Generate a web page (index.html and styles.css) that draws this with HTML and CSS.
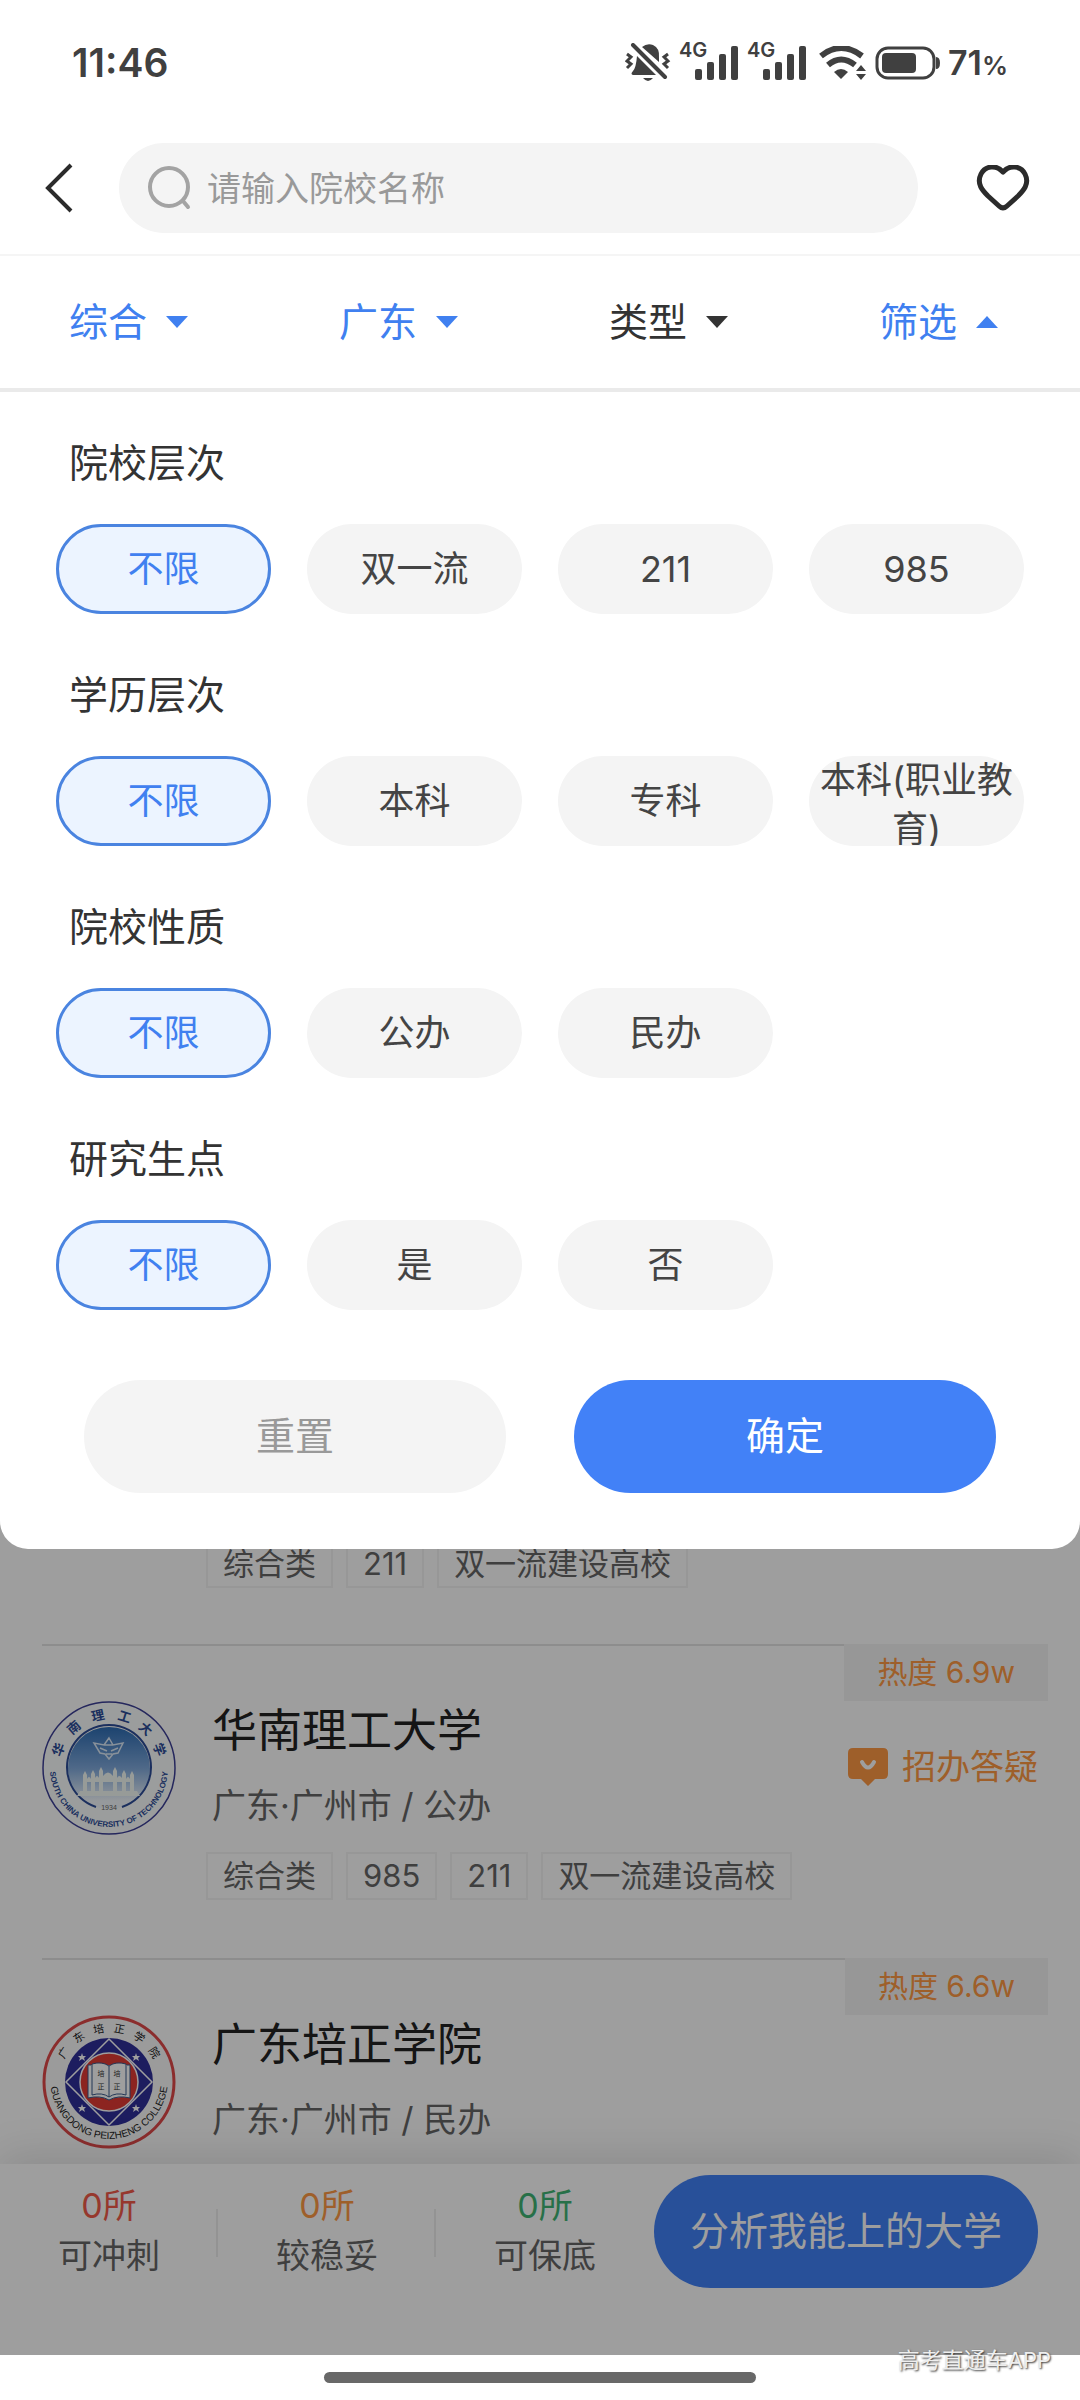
FILE: index.html
```html
<!DOCTYPE html>
<html lang="zh-CN">

<head>
    <meta charset="utf-8">
    <meta name="viewport" content="width=device-width, initial-scale=1">
    <title>院校筛选</title>
    <link rel="stylesheet" href="styles.css">
</head>

<body>
    <div class="app">
        <div class="statusbar">
            <span class="time">11:46</span>
            <div class="status-icons">
                <svg class="bell" width="46" height="40" viewBox="0 0 46 40">
                    <path d="M17 4 Q22 0 28 2 Q35 5 34 15 L34 19 Z" fill="#404040"/>
                    <path d="M12 13 L31 32 H8 Q5 31 8 28 Q11 25 12 13 Z" fill="#404040"/>
                    <path d="M18 35 H28 Q23 41 18 35 Z" fill="#404040"/>
                    <path d="M8 2 L40 34" stroke="#404040" stroke-width="4" stroke-linecap="round"/>
                    <path d="M2 11 L6 14 L2 18 L6 21 L2 25 M43 11 L39 14 L43 18 L39 21 L43 25" fill="none" stroke="#404040" stroke-width="3"/>
                </svg>
                <div class="signal">
                    <span>4G</span>
                    <svg width="44" height="34" viewBox="0 0 44 34" fill="#404040">
                        <rect x="0" y="23" width="7" height="11" rx="2"/><rect x="12" y="16" width="7" height="18" rx="2"/>
                        <rect x="24" y="8" width="7" height="26" rx="2"/><rect x="36" y="0" width="7" height="34" rx="2"/>
                    </svg>
                </div>
                <div class="signal">
                    <span>4G</span>
                    <svg width="44" height="34" viewBox="0 0 44 34" fill="#404040">
                        <rect x="0" y="23" width="7" height="11" rx="2"/><rect x="12" y="16" width="7" height="18" rx="2"/>
                        <rect x="24" y="8" width="7" height="26" rx="2"/><rect x="36" y="0" width="7" height="34" rx="2"/>
                    </svg>
                </div>
                <svg class="wifi" width="48" height="34" viewBox="0 0 48 34">
                    <path d="M2 10 Q22 -6 43 10" fill="none" stroke="#404040" stroke-width="6"/>
                    <path d="M9 19 Q22 8 36 19" fill="none" stroke="#404040" stroke-width="6"/>
                    <path d="M15 26 Q22 20 29 26 L22 33 Z" fill="#404040"/>
                    <path d="M42 19 L47 25 H37 Z M42 34 L47 28 H37 Z" fill="#404040"/>
                </svg>
                <svg class="battery" width="65" height="34" viewBox="0 0 65 34">
                    <rect x="2" y="2" width="57" height="30" rx="11" fill="none" stroke="#404040" stroke-width="3"/>
                    <rect x="7" y="7" width="34" height="20" rx="4" fill="#404040"/>
                    <path d="M61 11 Q65 11 65 17 Q65 23 61 23 Z" fill="#404040"/>
                </svg>
                <span class="percent">71<small>%</small></span>
            </div>
        </div>

        <header class="header">
            <button class="icon-btn" aria-label="返回">
                <svg width="30" height="52" viewBox="0 0 30 52"><path d="M27 3 L4 26 L27 49" fill="none" stroke="#2b2b2b" stroke-width="4"/></svg>
            </button>
            <label class="search">
                <svg width="44" height="44" viewBox="0 0 44 44" fill="none" stroke="#a3a3a3" stroke-width="4" stroke-linecap="round">
                    <circle cx="22" cy="21" r="19"/><path d="M36 35 L41 41"/>
                </svg>
                <input type="text" placeholder="请输入院校名称" aria-label="请输入院校名称">
            </label>
            <button class="icon-btn" aria-label="收藏">
                <svg width="54" height="46" viewBox="0 0 54 46"><path d="M27 7 C20 -1 9 1 5 9 C0 19 7 26 12 31 L23 41 Q27 45 31 41 L42 31 C47 26 54 19 49 9 C45 1 34 -1 27 7 Z" fill="none" stroke="#2b2b2b" stroke-width="5" stroke-linejoin="round"/></svg>
            </button>
        </header>

        <nav class="tabs">
            <button class="tab active">综合<i class="caret"></i></button>
            <button class="tab active">广东<i class="caret"></i></button>
            <button class="tab">类型<i class="caret"></i></button>
            <button class="tab active">筛选<i class="caret up"></i></button>
        </nav>

        <section class="panel">
            <h2>院校层次</h2>
            <div class="chips">
                <button class="chip selected">不限</button>
                <button class="chip">双一流</button>
                <button class="chip">211</button>
                <button class="chip">985</button>
            </div>
            <h2>学历层次</h2>
            <div class="chips">
                <button class="chip selected">不限</button>
                <button class="chip">本科</button>
                <button class="chip">专科</button>
                <button class="chip">本科(职业教育)</button>
            </div>
            <h2>院校性质</h2>
            <div class="chips">
                <button class="chip selected">不限</button>
                <button class="chip">公办</button>
                <button class="chip">民办</button>
            </div>
            <h2>研究生点</h2>
            <div class="chips">
                <button class="chip selected">不限</button>
                <button class="chip">是</button>
                <button class="chip">否</button>
            </div>
            <div class="actions">
                <button class="reset">重置</button>
                <button class="confirm">确定</button>
            </div>
        </section>

        <main class="page">
            <div class="results">
                <article class="school scrolled">
                    <div class="tags"><span>综合类</span><span>211</span><span>双一流建设高校</span></div>
                </article>

                <article class="school">
                    <svg class="logo" width="134" height="134" viewBox="0 0 134 134">
                        <defs>
                            <linearGradient id="sky" x1="0" y1="0" x2="0" y2="1">
                                <stop offset="0" stop-color="#2e6db4"/><stop offset="0.5" stop-color="#7fa9dc"/><stop offset="0.9" stop-color="#f2f7fc"/>
                            </linearGradient>
                            <path id="arc1" d="M8 67 A59 59 0 0 0 126 67"/>
                        </defs>
                        <circle cx="67" cy="67" r="66" fill="#fbfdfd" stroke="#3c3f96" stroke-width="1.5"/>
                        <circle cx="67" cy="67" r="41" fill="url(#sky)"/>
                        <path d="M54 106 A42 42 0 1 1 80 106" fill="none" stroke="#2d4d98" stroke-width="2"/>
                        <path d="M67 37 L71 44 L81 42 L76 52 L71 53 L67 58 L63 53 L58 52 L52 42 L62 44 Z M58 47 L65 50 M76 47 L69 50 M62 44 L71 44 M64 53 H70" fill="none" stroke="#dceaf8" stroke-width="1.5"/>
                        <g fill="#f4faf6">
                            <path d="M41 74 L43 70 L45 74 V91 H41 Z M49 73 L51 69 L53 73 V91 H49 Z M57 70 L59 66 L61 70 V91 H57 Z M71 70 L73 66 L75 70 V91 H71 Z M80 73 L82 69 L84 73 V91 H80 Z M88 74 L90 70 L92 74 V91 H88 Z"/>
                            <path d="M45 78 Q47 74 49 78 L53 77 Q55 73 57 77 L61 75 Q66 68 71 75 L75 77 Q77 73 80 77 L84 78 Q86 74 88 78 V81 H45 Z M38 90 H95 L98 95 H35 Z"/>
                        </g>
                        <text class="year" x="67" y="109">1934</text>
                        <g class="seal-cn blue">
                            <text x="67" y="18" transform="rotate(-70 67 67)">华</text>
                            <text x="67" y="18" transform="rotate(-41 67 67)">南</text>
                            <text x="67" y="18" transform="rotate(-12 67 67)">理</text>
                            <text x="67" y="18" transform="rotate(17 67 67)">工</text>
                            <text x="67" y="18" transform="rotate(43 67 67)">大</text>
                            <text x="67" y="18" transform="rotate(70 67 67)">学</text>
                        </g>
                        <text class="seal-en narrow"><textPath href="#arc1" startOffset="50%">SOUTH CHINA UNIVERSITY OF TECHNOLOGY</textPath></text>
                    </svg>
                    <div class="info">
                        <h3>华南理工大学</h3>
                        <p>广东·广州市 / 公办</p>
                        <div class="tags"><span>综合类</span><span>985</span><span>211</span><span>双一流建设高校</span></div>
                    </div>
                    <div class="side">
                        <span class="heat">热度 6.9w</span>
                        <a class="ask" href="#">
                            <svg width="40" height="38" viewBox="0 0 40 38"><path d="M5 0 H35 Q40 0 40 5 V26 Q40 31 35 31 H27 L20 38 L13 31 H5 Q0 31 0 26 V5 Q0 0 5 0 Z" fill="#ff9a45"/><path d="M14 14 Q20 25 26 14" fill="none" stroke="#fff" stroke-width="4" stroke-linecap="round"/></svg>
                            招办答疑
                        </a>
                    </div>
                </article>

                <article class="school">
                    <svg class="logo" width="134" height="134" viewBox="0 0 134 134">
                        <defs>
                            <path id="arc2" d="M8 64 A59 60 0 0 0 126 64"/>
                            <path id="star" d="M0 -4 L1 -1 L4 -1 L2 1 L3 4 L0 2 L-3 4 L-2 1 L-4 -1 L-1 -1 Z" fill="#fff"/>
                        </defs>
                        <circle cx="67" cy="67" r="65" fill="#fbfbfb" stroke="#e04a4a" stroke-width="3"/>
                        <circle cx="67" cy="67" r="44" fill="#2f2f9a"/>
                        <path d="M67 24 L110 67 L67 110 L24 67 Z" fill="none" stroke="#fff" stroke-width="1.5"/>
                        <circle cx="67" cy="67" r="29" fill="#e23a35" stroke="#fff" stroke-width="1.5"/>
                        <use href="#star" x="40" y="42"/><use href="#star" x="94" y="42"/>
                        <use href="#star" x="40" y="93"/><use href="#star" x="94" y="93"/>
                        <path d="M49 50 H46 V83 Q58 80 67 85 Q76 80 88 83 V50 H85" fill="#fff" stroke="#3a5a8c"/>
                        <path d="M67 51 Q60 46 50 49 V80 Q60 77 67 82 Q74 77 84 80 V49 Q74 46 67 51 Z M67 51 V82" fill="#fff" stroke="#3a5a8c"/>
                        <g class="book">
                            <text x="59" y="61">培</text><text x="75" y="61">培</text>
                            <text x="59" y="74">正</text><text x="75" y="74">正</text>
                        </g>
                        <g class="seal-cn">
                            <text x="67" y="17" transform="rotate(-57 67 67)">广</text>
                            <text x="67" y="17" transform="rotate(-34 67 67)">东</text>
                            <text x="67" y="17" transform="rotate(-11 67 67)">培</text>
                            <text x="67" y="17" transform="rotate(11 67 67)">正</text>
                            <text x="67" y="17" transform="rotate(34 67 67)">学</text>
                            <text x="67" y="17" transform="rotate(57 67 67)">院</text>
                        </g>
                        <text class="seal-en"><textPath href="#arc2" startOffset="50%">GUANGDONG PEIZHENG COLLEGE</textPath></text>
                    </svg>
                    <div class="info">
                        <h3>广东培正学院</h3>
                        <p>广东·广州市 / 民办</p>
                    </div>
                    <div class="side">
                        <span class="heat">热度 6.6w</span>
                    </div>
                </article>
            </div>

            <footer class="bottombar">
                <div class="stat"><b class="red">0所</b><span>可冲刺</span></div>
                <div class="stat"><b class="orange">0所</b><span>较稳妥</span></div>
                <div class="stat"><b class="green">0所</b><span>可保底</span></div>
                <button class="analyse">分析我能上的大学</button>
            </footer>
            <div class="mask"></div>
        </main>

        <div class="homebar">
            <i class="home-pill"></i>
            <span class="watermark">高考直通车APP</span>
        </div>
    </div>
</body>

</html>
```
FILE: styles.css
```css
* {
    box-sizing: border-box;
}

body {
    margin: 0;
    background: #fff;
    color: #333;
    font-family: Inter, "Noto Sans CJK SC", sans-serif;
    line-height: 1.25;
}

button,
input {
    margin: 0;
    padding: 0;
    border: 0;
    background: none;
    color: inherit;
    font-family: inherit;
    line-height: inherit;
}

svg {
    display: block;
    flex: none;
}

h2, h3, p {
    margin: 0;
    font-weight: 400;
}

.app {
    display: flex;
    flex-direction: column;
    height: 100vh;
    overflow: hidden;
}

/* status bar */
.statusbar {
    display: flex;
    flex: none;
    align-items: center;
    justify-content: space-between;
    height: 126px;
    padding: 0 72px;
    color: #404040;
    font-weight: 600;
}

.time {
    font-size: 39px;
}

.status-icons {
    display: flex;
    align-items: center;
    gap: 8px;
}

.signal {
    display: flex;
    align-items: flex-end;
}

.signal span {
    align-self: flex-start;
    width: 16px;
    font-size: 20px;
    line-height: 16px;
    margin-top: -4px;
}

.wifi {
    margin-left: 4px;
}

.percent {
    font-size: 34px;
}

.percent small {
    font-size: 26px;
}

/* search row */
.header {
    display: flex;
    flex: none;
    align-items: center;
    justify-content: space-between;
    padding: 17px 50px 21px 44px;
    border-bottom: 2px solid #f5f5f5;
}

.search {
    display: flex;
    flex: 1;
    align-items: center;
    gap: 16px;
    height: 90px;
    margin: 0 58px 0 45px;
    padding: 0 28px;
    border-radius: 45px;
    background: #f4f4f4;
}

.search input {
    flex: 1;
    min-width: 0;
    height: 44px;
    font-size: 34px;
    outline: none;
}

.search input::placeholder {
    color: #999;
}

/* tabs */
.tabs {
    display: grid;
    flex: none;
    grid-template-columns: repeat(4, 1fr);
    height: 136px;
    border-bottom: 4px solid #eaeaea;
}

.tab {
    display: flex;
    align-items: center;
    gap: 19px;
    padding-left: 69px;
    font-size: 39px;
}

.tab.active {
    color: #4080f0;
}

.caret {
    border: 11px solid transparent;
    border-top: 12px solid currentColor;
    border-bottom: 0;
}

.caret.up {
    border-top: 0;
    border-bottom: 12px solid currentColor;
}

/* filter panel */
.panel {
    position: relative;
    z-index: 2;
    flex: none;
    padding: 51px 56px 56px;
    border-radius: 0 0 28px 28px;
    background: #fff;
}

.panel h2 {
    padding-left: 13px;
    font-size: 39px;
    line-height: 40px;
}

.chips {
    display: grid;
    grid-template-columns: repeat(4, 1fr);
    gap: 36px;
    margin: 41px 0 61px;
}

.chip {
    display: flex;
    align-items: safe center;
    justify-content: center;
    height: 90px;
    border-radius: 45px;
    background: #f4f4f4;
    color: #444;
    font-size: 36px;
    line-height: 49px;
    overflow: hidden;
}

.chip.selected {
    border: 3px solid #4a84e0;
    background: #ecf4ff;
    color: #4080f0;
}

.actions {
    display: grid;
    grid-template-columns: 1fr 1fr;
    gap: 68px;
    padding: 9px 28px 0;
}

.actions button,
.analyse {
    height: 113px;
    border-radius: 57px;
    font-size: 39px;
}

.reset {
    background: #f4f4f4;
    color: #999;
}

.confirm,
.analyse {
    background: #4281f7;
    color: #fff;
}

/* dimmed page under the panel */
.page {
    position: relative;
    display: flex;
    flex: 1;
    flex-direction: column;
    min-height: 0;
    margin-top: -28px;
}

.mask {
    position: absolute;
    inset: 0;
    z-index: 1;
    background: rgba(0, 0, 0, 0.38);
}

.results {
    flex: 1;
    min-height: 0;
    padding: 0 32px 0 42px;
    overflow: hidden;
}

.school {
    display: flex;
    gap: 36px;
    height: 314px;
    background: linear-gradient(#e4e4e4, #e4e4e4) no-repeat 0 0 / calc(100% - 8px) 2px;
}

.scrolled {
    height: 123px;
    padding: 19px 0 0 164px;
    background: none;
}

.logo {
    margin-top: 57px;
}

.info {
    flex: 1;
    padding-top: 58px;
}

.info h3 {
    color: #222;
    font-size: 45px;
    line-height: 58px;
}

.info p {
    margin: 24px 0;
    color: #666;
    font-size: 34px;
    line-height: 44px;
}

.tags {
    display: flex;
    align-items: flex-start;
    gap: 13px;
}

.info .tags {
    margin-left: -6px;
}

.tags span {
    padding: 0 15px;
    border: 2px solid #f4f4f4;
    color: #666;
    font-size: 31px;
    line-height: 44px;
    white-space: nowrap;
}

.side {
    display: flex;
    flex-direction: column;
    align-items: flex-end;
    gap: 44px;
}

.heat {
    padding: 0 33px;
    background: #f4f4f4;
    color: #ff9a45;
    font-size: 30px;
    line-height: 57px;
}

.ask {
    display: flex;
    align-items: center;
    gap: 14px;
    margin-right: 10px;
    color: #ff9a45;
    font-size: 34px;
    line-height: 44px;
    text-decoration: none;
}

.seal-en,
.seal-cn,
.year,
.book {
    text-anchor: middle;
}

.seal-en {
    fill: #222;
    font: 10px "Liberation Sans", sans-serif;
}

.seal-en.narrow {
    fill: #2d4d98;
    font: bold 8px "Liberation Sans Narrow", "Liberation Sans", sans-serif;
}

.seal-cn {
    fill: #222;
    font-size: 11px;
}

.seal-cn.blue {
    fill: #2d4d98;
    font-size: 13px;
    font-weight: 700;
}

.year {
    fill: #666;
    font: 7px "Liberation Sans", sans-serif;
}

.book {
    fill: #333;
    font-size: 7px;
}

/* bottom bar */
.bottombar {
    display: flex;
    flex: none;
    align-items: flex-start;
    height: 191px;
    padding: 11px 42px 0 0;
    background: #fff;
    box-shadow: 0 -8px 40px rgba(0, 0, 0, 0.12);
}

.stat {
    display: flex;
    flex: 1;
    flex-direction: column;
    align-items: center;
    padding-top: 6px;
    color: #666;
    font-size: 34px;
    line-height: 50px;
    background: linear-gradient(#eee, #eee) no-repeat 100% 34px / 2px 48px;
}

.stat:nth-child(3) {
    background: none;
}

.stat b {
    font-weight: 400;
}

.red {
    color: #f25b4a;
}

.orange {
    color: #ff9a45;
}

.green {
    color: #3fb574;
}

.analyse {
    padding: 0 36px;
}

/* system navigation */
.homebar {
    position: relative;
    display: flex;
    flex: none;
    align-items: center;
    justify-content: center;
    height: 45px;
    background: #fff;
}

.home-pill {
    width: 40%;
    height: 11px;
    border-radius: 6px;
    background: #686868;
}

.watermark {
    position: absolute;
    z-index: 3;
    right: 29px;
    bottom: 24px;
    color: #eee;
    font-size: 22px;
    line-height: 32px;
    text-shadow: 1px 1px 2px #333;
}
```
